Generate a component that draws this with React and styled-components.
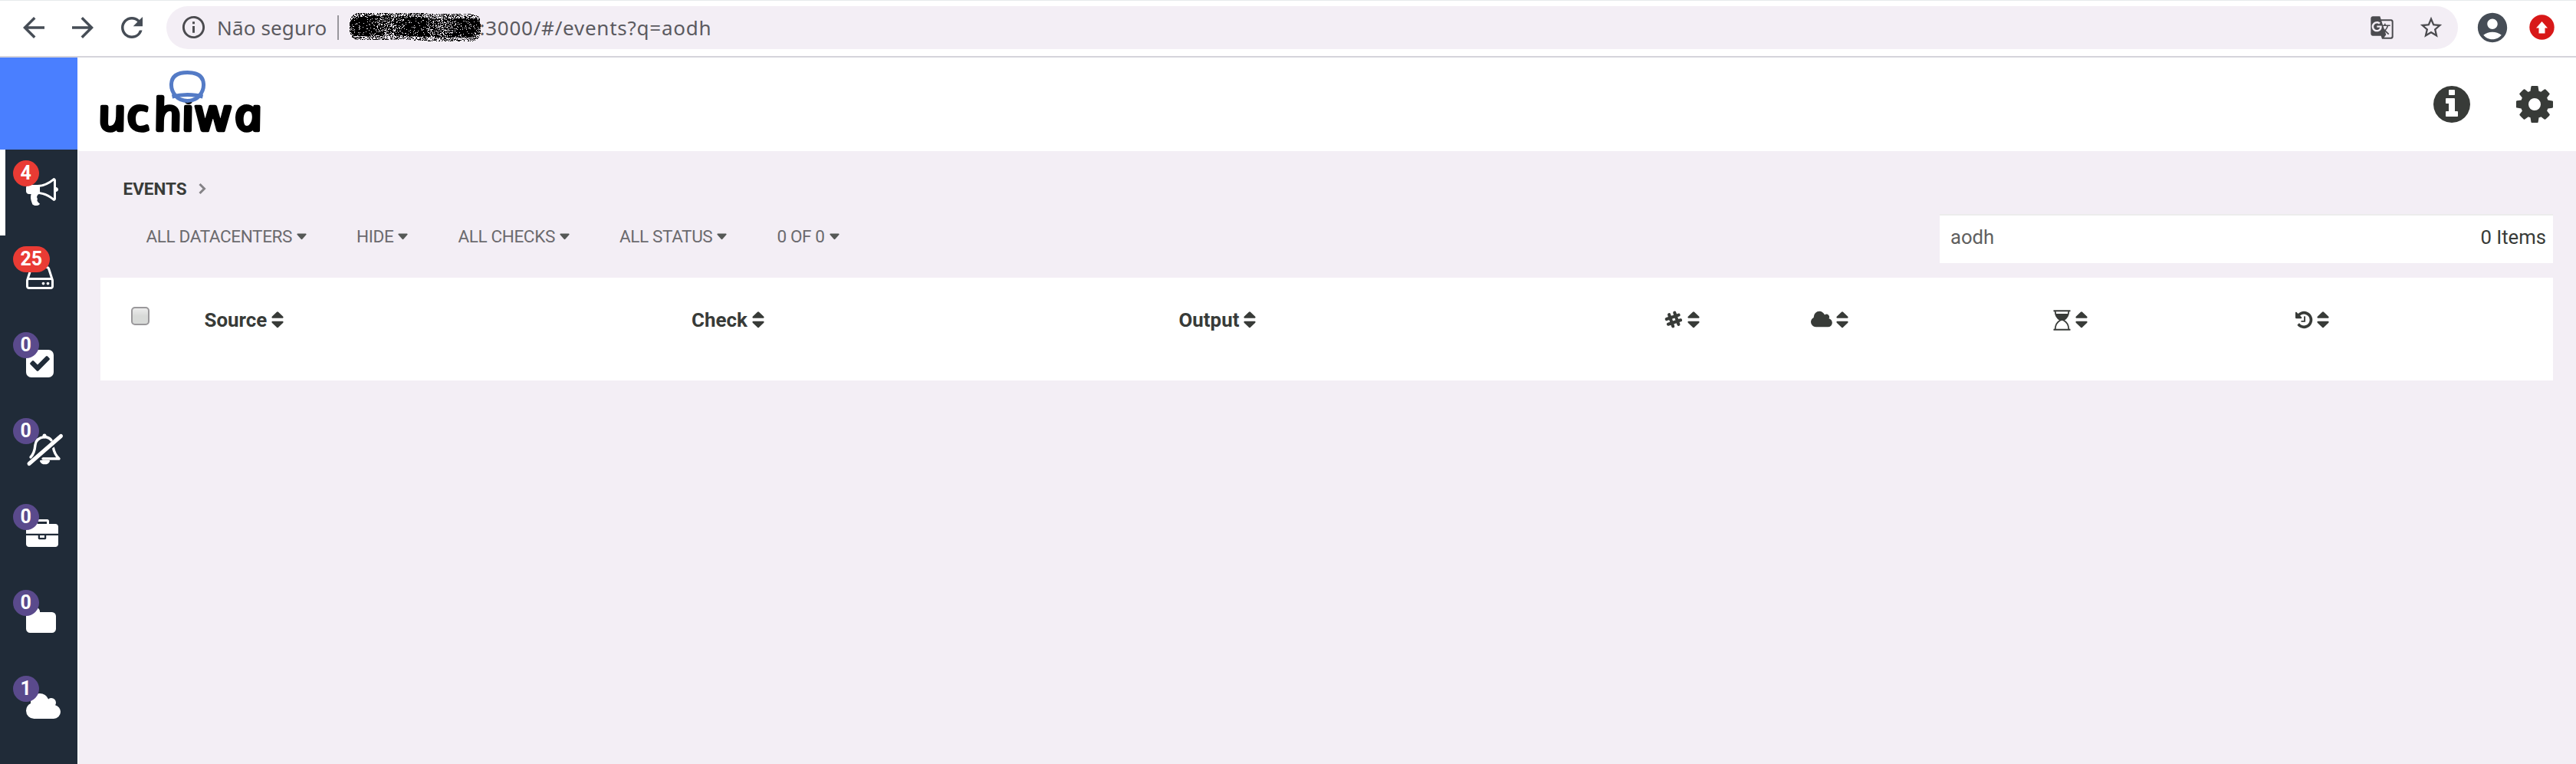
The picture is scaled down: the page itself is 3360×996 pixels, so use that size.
import React from "react";
import styled, { createGlobalStyle } from "styled-components";
import {
  MdArrowBack,
  MdArrowForward,
  MdRefresh,
  MdInfoOutline,
  MdStarBorder,
  MdGTranslate,
  MdAccountCircle,
} from "react-icons/md";

const GlobalStyle = createGlobalStyle`
  * { box-sizing: border-box; }
  body {
    margin: 0;
    background: #f3eef5;
    font-family: Roboto, "Liberation Sans", sans-serif;
    color: #383b38;
  }
  svg { display: block; flex: none; overflow: visible; }
`;

const Page = styled.div`
  display: flex;
  flex-direction: column;
  height: 996px;
  overflow: hidden;
`;

/* Browser bar */

const BrowserBar = styled.header`
  display: flex;
  align-items: center;
  height: 75px;
  padding: 0 23px 3px 23px;
  background: #fff;
  border-top: 1px solid #e6eaeb;
  border-bottom: 2px solid #d5d4db;
  color: #464d56;
`;

const NavButtons = styled.nav`
  display: flex;
  gap: 22px;
  margin-right: 24px;
`;

const AddressField = styled.div`
  display: flex;
  align-items: center;
  flex: 1;
  height: 56px;
  padding: 0 18px 0 18px;
  border-radius: 28px;
  background: #f3eef5;
  color: #4b4b4f;
`;

const AddressText = styled.span`
  font-family: "Noto Sans", sans-serif;
  font-size: 26px;
  line-height: 36px;
  white-space: nowrap;
  letter-spacing: ${(p) => p.$tracking};
  margin-left: ${(p) => p.$indent || 0};
  color: #5b5a60;
`;

const Divider = styled.span`
  width: 2px;
  height: 32px;
  margin: 0 14px 0 14px;
  background: #98969c;
`;

const AddressActions = styled.div`
  display: flex;
  align-items: center;
  gap: 31px;
  margin-left: auto;
`;

const BrowserActions = styled.div`
  display: flex;
  align-items: center;
  gap: 25px;
  margin: 0 5px 0 22px;
`;

/* Application frame */

const Frame = styled.div`
  display: flex;
  flex: 1;
  min-height: 0;
`;

const Sidebar = styled.aside`
  width: 102.5px;
  border-right: 2px solid #fdfcfe;
  background: #202b38;
`;

const SidebarTop = styled.div`
  height: 119.5px;
  background: #4a7fff;
`;

const SidebarItem = styled.a`
  display: flex;
  position: relative;
  height: 112px;
  padding: 34px 0 0 ${(p) => (p.$active ? "27px" : "34px")};
  border-left: ${(p) => (p.$active ? "7px solid #fff" : "none")};
  color: #fff;
`;

const Badge = styled.span`
  position: absolute;
  top: 14px;
  left: ${(p) => (p.$active ? "9.5px" : "16.5px")};
  min-width: 34px;
  height: 34px;
  padding: 0 10px;
  border-radius: 17px;
  background: ${(p) => (p.$alert ? "#e93b34" : "#5a4a8c")};
  font-size: 25px;
  font-weight: 700;
  line-height: 34px;
  text-align: center;
`;

const Main = styled.main`
  display: flex;
  flex-direction: column;
  flex: 1;
  min-width: 0;
`;

const TopBar = styled.div`
  display: flex;
  align-items: flex-start;
  justify-content: space-between;
  height: 122px;
  padding: 15px 30px 0 25.5px;
  background: #fff;
`;

const TopActions = styled.div`
  display: flex;
  gap: 60px;
  padding-top: 18px;
`;

const Content = styled.section`
  display: flex;
  flex-direction: column;
  padding: 0 30px 0 28px;
`;

const Breadcrumb = styled.div`
  display: flex;
  align-items: center;
  gap: 15px;
  height: 81px;
  padding: 34px 0 17px 30px;
  font-size: 22.5px;
  font-weight: 700;
  line-height: 30px;
`;

const Toolbar = styled.div`
  display: flex;
  align-items: flex-start;
  justify-content: space-between;
  height: 84px;
  padding-top: 1px;
`;

const Filters = styled.div`
  display: flex;
  gap: 65px;
  padding: 14px 0 0 60px;
`;

const Filter = styled.span`
  display: flex;
  align-items: center;
  gap: 6px;
  font-size: 22.5px;
  letter-spacing: -0.36px;
  line-height: 30px;
  white-space: nowrap;
  color: #6b6a6e;
`;

const SearchBox = styled.div`
  display: flex;
  align-items: center;
  justify-content: space-between;
  width: 800px;
  height: 64px;
  padding: 0 9px 6px 14px;
  border-top: 2px solid #ececec;
  background: #fff;
  font-size: 25.7px;
`;

const SearchValue = styled.span`
  color: #606060;
`;

const Table = styled.div`
  display: grid;
  grid-template-columns: 136px 635.5px 635.5px 633.5px 190.5px 316px 316px 1fr;
  height: 134px;
  background: #fff;
`;

const HeaderCell = styled.div`
  display: flex;
  align-items: center;
  gap: 6px;
  height: 30px;
  margin-top: 40px;
  font-size: 25.9px;
  font-weight: 700;
`;

const Checkbox = styled.span`
  width: 24px;
  height: 24px;
  margin: 38px 0 0 40px;
  border: 2px solid #9a989b;
  border-radius: 5px;
  background: linear-gradient(#ececec, #d8dad8 50%);
`;

/* Icons drawn on a 1792-unit em */

const GLYPHS = {
  bullhorn: {
    box: "0 0 1792 1792",
    d: "M1664 640q53 0 90.5 37.5t37.5 90.5-37.5 90.5-90.5 37.5v384q0 52-38 90t-90 38q-417-347-812-380-58 19-91 66t-31 100.5 40 92.5q-20 33-23 65.5t6 58 33.5 55 48 50 61.5 50.5q-29 58-111.5 83t-168.5 11.5-132-55.5q-7-23-29.5-87.5t-32-94.5-23-89-15-101 3.5-98.5 22-110.5h-122q-66 0-113-47t-47-113v-192q0-66 47-113t113-47h480q435 0 896-384 52 0 90 38t38 90v384zm-128 604v-954q-394 302-768 343v270q377 42 768 341z",
  },
  drive: {
    box: "128 0 1536 1792",
    d: "M1168 1216q0 33-23.5 56.5t-56.5 23.5-56.5-23.5-23.5-56.5 23.5-56.5 56.5-23.5 56.5 23.5 23.5 56.5zm256 0q0 33-23.5 56.5t-56.5 23.5-56.5-23.5-23.5-56.5 23.5-56.5 56.5-23.5 56.5 23.5 23.5 56.5zm112 160v-320q0-13-9.5-22.5t-22.5-9.5h-1216q-13 0-22.5 9.5t-9.5 22.5v320q0 13 9.5 22.5t22.5 9.5h1216q13 0 22.5-9.5t9.5-22.5zm-1230-480h1180l-157-482q-4-13-16-21.5t-26-8.5h-782q-14 0-26 8.5t-16 21.5zm1358 160v320q0 66-47 113t-113 47h-1216q-66 0-113-47t-47-113v-320q0-25 16-75l197-606q17-53 63-86t101-33h782q55 0 101 33t63 86l197 606q16 50 16 75z",
  },
  check: {
    box: "128 0 1536 1792",
    d: "M813 1299l614-614q19-19 19-45t-19-45l-102-102q-19-19-45-19t-45 19l-467 467-211-211q-19-19-45-19t-45 19l-102 102q-19 19-19 45t19 45l358 358q19 19 45 19t45-19zm851-883v960q0 119-84.5 203.5t-203.5 84.5h-960q-119 0-203.5-84.5t-84.5-203.5v-960q0-119 84.5-203.5t203.5-84.5h960q119 0 203.5 84.5t84.5 203.5z",
  },
  briefcase: {
    box: "0 0 1792 1792",
    d: "M640 256h512v-128h-512v128zm1152 640v480q0 66-47 113t-113 47h-1472q-66 0-113-47t-47-113v-480h672v160q0 26 19 45t45 19h320q26 0 45-19t19-45v-160h672zm-768 0v128h-256v-128h256zm768-480v384h-1792v-384q0-66 47-113t113-47h352v-160q0-40 28-68t68-28h576q40 0 68 28t28 68v160h352q66 0 113 47t47 113z",
  },
  folder: {
    box: "64 0 1664 1792",
    d: "M1728 608v704q0 92-66 158t-158 66h-1216q-92 0-158-66t-66-158v-960q0-92 66-158t158-66h320q92 0 158 66t66 158v32h672q92 0 158 66t66 158z",
  },
  cloud: {
    box: "64 0 1920 1792",
    d: "M1984 1152q0 159-112.5 271.5t-271.5 112.5h-1088q-185 0-316.5-131.5t-131.5-316.5q0-132 71-241.5t187-163.5q-2-28-2-43 0-212 150-362t362-150q158 0 286.5 88t187.5 230q70-62 166-62 106 0 181 75t75 181q0 75-41 138 129 30 213 134.5t84 239.5z",
  },
  info: {
    box: "128 0 1536 1792",
    d: "M1152 1376v-160q0-14-9-23t-23-9h-96v-512q0-14-9-23t-23-9h-320q-14 0-23 9t-9 23v160q0 14 9 23t23 9h96v320h-96q-14 0-23 9t-9 23v160q0 14 9 23t23 9h448q14 0 23-9t9-23zm-128-896v-160q0-14-9-23t-23-9h-192q-14 0-23 9t-9 23v160q0 14 9 23t23 9h192q14 0 23-9t9-23zm640 416q0 209-103 385.5t-279.5 279.5-385.5 103-385.5-103-279.5-279.5-103-385.5 103-385.5 279.5-279.5 385.5-103 385.5 103 279.5 279.5 103 385.5z",
  },
  cog: {
    box: "128 0 1536 1792",
    d: "M1152 896q0-106-75-181t-181-75-181 75-75 181 75 181 181 75 181-75 75-181zm512-109v222q0 12-8 23t-20 13l-185 28q-19 54-39 91 35 50 107 138 10 12 10 25t-9 23q-27 37-99 108t-94 71q-12 0-26-9l-138-108q-44 23-91 38-16 136-29 186-7 28-36 28h-222q-14 0-24.5-8.5t-11.5-21.5l-28-184q-49-16-90-37l-141 107q-10 9-25 9-14 0-25-11-126-114-165-168-7-10-7-23 0-12 8-23 15-21 51-66.5t54-70.5q-27-50-41-99l-183-27q-13-2-21-12.5t-8-23.5v-222q0-12 8-23t19-13l186-28q14-46 39-92-40-57-107-138-10-12-10-24 0-10 9-23 26-36 98.5-107.5t94.5-71.5q13 0 26 10l138 107q44-23 91-38 16-136 29-186 7-28 36-28h222q14 0 24.5 8.5t11.5 21.5l28 184q49 16 90 37l142-107q9-9 24-9 13 0 25 10 129 119 165 170 7 8 7 22 0 12-8 23-15 21-51 66.5t-54 70.5q26 50 41 98l183 28q13 2 21 12.5t8 23.5z",
  },
  history: {
    box: "128 0 1536 1792",
    d: "M1664 896q0 156-61 298t-164 245-245 164-298 61q-172 0-327-72.5t-264-204.5q-7-10-6.5-22.5t8.5-20.5l137-138q10-9 25-9 16 2 23 12 73 95 179 147t225 52q104 0 198.5-40.5t163.5-109.5 109.5-163.5 40.5-198.5-40.5-198.5-109.5-163.5-163.5-109.5-198.5-40.5q-98 0-188 35.5t-160 101.5l137 138q31 30 14 69-17 40-59 40h-448q-26 0-45-19t-19-45v-448q0-42 40-59 39-17 69 14l130 129q107-101 244.5-156.5t284.5-55.5q156 0 298 61t245 164 164 245 61 298zm-640-288v448q0 14-9 23t-23 9h-320q-14 0-23-9t-9-23v-64q0-14 9-23t23-9h224v-352q0-14 9-23t23-9h64q14 0 23 9t9 23z",
  },
};

function Glyph({ name, size }) {
  const { box, d } = GLYPHS[name];
  const width = (size * Number(box.split(" ")[2])) / 1792;
  return (
    <svg width={width} height={size} viewBox={box} fill="currentColor">
      <path d={d} />
    </svg>
  );
}

function MutedBell() {
  return (
    <svg width="49" height="44" viewBox="0 0 49 44" fill="none" stroke="#fff" strokeLinecap="round" strokeLinejoin="round">
      <path d="M6 31Q11 26 12 15Q13 6 24 4.5Q30 5 33 9" strokeWidth="3.4" />
      <path d="M24 4V3" strokeWidth="5" />
      <path d="M35.5 19Q37 27 43 33H22" strokeWidth="3.4" />
      <path d="M19 36a6 5.5 0 0 0 11 0z" fill="#fff" strokeWidth="2" />
      <path d="M1 43L45 3" stroke="#202b38" strokeWidth="3" transform="translate(2 3)" strokeLinecap="butt" />
      <path d="M4 39.5L45.5 3.5" strokeWidth="5" />
    </svg>
  );
}

function Slack() {
  return (
    <svg width="24" height="26" viewBox="0 0 24.5 26" fill="none" stroke="currentColor" strokeWidth="4.2" strokeLinecap="round">
      <path d="M6.2 6L11.4 21.5M13.5 3.5L18.8 19M2.8 12L19 6.5M5 18.8L21.5 13.3" />
    </svg>
  );
}

function Hourglass() {
  return (
    <svg width="23" height="27" viewBox="0 0 23 27" fill="none" stroke="currentColor">
      <path d="M0.5 1.3H22.5M0.5 25.7H22.5" strokeWidth="2" />
      <path d="M2.7 2Q3 10 9.5 13.5Q3 17 2.7 25M20.3 2Q20 10 13.5 13.5Q20 17 20.3 25" strokeWidth="1.8" />
      <path d="M3.2 5H19.8Q18.5 11 13.5 14H9.5Q4.5 11 3.2 5z" fill="currentColor" stroke="none" />
    </svg>
  );
}

function Caret() {
  return (
    <svg width="13" height="9" viewBox="0 0 13 9" fill="#555856">
      <path d="M1 .5h11q1.2.6.4 1.6L7.3 7.8q-.8.8-1.6 0L.6 2.1Q-.2 1.1 1 .5z" />
    </svg>
  );
}

function Sort() {
  return (
    <svg width="16" height="22" viewBox="0 0 16 22" fill="currentColor">
      <path d="M1.2 8.7h13.6q1.5-.6.5-2L9 .8q-1-1-2 0L.7 6.7q-1 1.4.5 2zM1.2 12.7h13.6q1.5.6.5 2L9 20.7q-1 1-2 0L.7 14.7q-1-1.4.5-2z" />
    </svg>
  );
}

function Logo() {
  return (
    <svg width="216" height="90" viewBox="0 0 216 90">
      <text
        transform="translate(2 79.5) skewX(12) scale(1.08 1)"
        x="1.5 36 68.5 102 119.5 166"
        y="0"
        fontFamily="'Noto Sans', sans-serif"
        fontStyle="italic"
        fontSize="58"
        fill="#000"
        stroke="#000"
        strokeWidth="4.5"
        strokeLinejoin="round"
      >
        uchiwa
      </text>
      <path d="M101 35Q95 28 95.5 19.5C96 9 104 4.5 116.5 4.5S137 9 137.5 19.5Q138 28 132 35Q126 41.5 116.5 41.5T101 35z" fill="#fff" stroke="#547bc6" strokeWidth="5" />
      <path d="M96.5 36Q116.5 31 136.5 36" fill="none" stroke="#547bc6" strokeWidth="5" />
    </svg>
  );
}

function Upload() {
  return (
    <svg width="33" height="33" viewBox="0 0 33 33">
      <circle cx="16.5" cy="16.5" r="16.2" fill="#d81818" />
      <path d="M16.5 9L24 17.5H20.5V24.5H12.5V17.5H9z" fill="#fff" />
    </svg>
  );
}

/* Pixel scribble that hides the host name in the address */
function scribblePath() {
  let seed = 7;
  const next = () => {
    seed = (seed * 48271) % 2147483647;
    return seed / 2147483647;
  };
  let d = "";
  for (let x = 0; x < 171; x += 1) {
    const end = Math.min(x, 170 - x);
    const round = end < 14 ? Math.sqrt(1 - ((14 - end) / 14) ** 2) : 1;
    const mid = 18 + 1.5 * Math.sin(x / 28 + 3);
    const half = 8 + 10 * round;
    for (let y = 0; y < 37; y += 1) {
      const r = Math.abs(y + 0.5 - mid) / half;
      const keep = r > 1 ? 0 : r > 0.7 ? 0.46 : 0.82 + 0.12 * Math.sin(x / 11);
      if (next() < keep) d += `M${x} ${y}h1v1h-1z`;
    }
  }
  return d;
}

const Scribble = styled.svg`
  margin-right: -2px;
`;

const MENU = [
  { count: 4, alert: true, active: true, icon: <Glyph name="bullhorn" size={42} /> },
  { count: 25, alert: true, icon: <Glyph name="drive" size={42} /> },
  { count: 0, icon: <Glyph name="check" size={42} /> },
  { count: 0, icon: <MutedBell /> },
  { count: 0, icon: <Glyph name="briefcase" size={42} /> },
  { count: 0, icon: <Glyph name="folder" size={42} /> },
  { count: 1, icon: <Glyph name="cloud" size={42} /> },
];

const FILTERS = ["ALL DATACENTERS", "HIDE", "ALL CHECKS", "ALL STATUS", "0 OF 0"];

const COLUMNS = [
  "Source",
  "Check",
  "Output",
  <Slack />,
  <Glyph name="cloud" size={26} />,
  <Hourglass />,
  <Glyph name="history" size={26} />,
];

export default function App() {
  return (
    <Page>
      <GlobalStyle />
      <BrowserBar>
        <NavButtons>
          <MdArrowBack size={42} />
          <MdArrowForward size={42} />
          <MdRefresh size={42} />
        </NavButtons>
        <AddressField>
          <MdInfoOutline size={35} />
          <AddressText $tracking="0.15px" $indent="13px">
            Não seguro
          </AddressText>
          <Divider />
          <Scribble width="171" height="37" viewBox="0 0 171 37" shapeRendering="crispEdges">
            <path d={scribblePath()} />
          </Scribble>
          <AddressText $tracking="0.75px">:3000/#/events?q=aodh</AddressText>
          <AddressActions>
            <MdGTranslate size={32} />
            <MdStarBorder size={34} />
          </AddressActions>
        </AddressField>
        <BrowserActions>
          <MdAccountCircle size={46} />
          <Upload />
        </BrowserActions>
      </BrowserBar>
      <Frame>
        <Sidebar>
          <SidebarTop />
          {MENU.map((item, i) => (
            <SidebarItem key={i} $active={item.active}>
              {item.icon}
              <Badge $alert={item.alert} $active={item.active}>
                {item.count}
              </Badge>
            </SidebarItem>
          ))}
        </Sidebar>
        <Main>
          <TopBar>
            <Logo />
            <TopActions>
              <Glyph name="info" size={56} />
              <Glyph name="cog" size={56} />
            </TopActions>
          </TopBar>
          <Content>
            <Breadcrumb>
              EVENTS
              <svg width="10" height="14" viewBox="0 0 10 14" fill="none" stroke="#858387" strokeWidth="3">
                <path d="M1.5 1L7.5 7L1.5 13" />
              </svg>
            </Breadcrumb>
            <Toolbar>
              <Filters>
                {FILTERS.map((label) => (
                  <Filter key={label}>
                    {label}
                    <Caret />
                  </Filter>
                ))}
              </Filters>
              <SearchBox>
                <SearchValue>aodh</SearchValue>
                <span>0 Items</span>
              </SearchBox>
            </Toolbar>
            <Table>
              <Checkbox role="checkbox" aria-checked="false" />
              {COLUMNS.map((label, i) => (
                <HeaderCell key={i}>
                  {label}
                  <Sort />
                </HeaderCell>
              ))}
            </Table>
          </Content>
        </Main>
      </Frame>
    </Page>
  );
}
